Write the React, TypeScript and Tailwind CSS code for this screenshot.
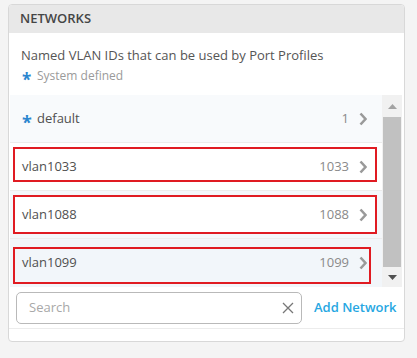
import React from 'react';

interface Network {
  name: string;
  vlan: string;
  system?: boolean;
  bg: string;
  box?: string;
}

const networks: Network[] = [
  { name: 'default', vlan: '1', system: true, bg: 'bg-[#f8fafc]' },
  { name: 'vlan1033', vlan: '1033', bg: 'bg-white', box: 'top-[4px] bottom-[8px] left-[3px] right-[5px]' },
  { name: 'vlan1088', vlan: '1088', bg: 'bg-[#f4f7fa]', box: 'top-[4px] bottom-[4px] left-[3px] right-[5px] bg-white' },
  { name: 'vlan1099', vlan: '1099', bg: 'bg-[#f2f6fa]', box: 'top-[8px] bottom-[3px] left-[3px] right-[11px]' },
];

function Chevron() {
  return (
    <svg width="8" height="14" viewBox="0 0 8 14" fill="none">
      <polyline points="1.5,1.5 6.5,7 1.5,12.5" stroke="#9a9a9a" strokeWidth="2.6" />
    </svg>
  );
}

function Star({ className }: { className?: string }) {
  return (
    <span className={'font-bold text-[#2b86cf] ' + (className ?? '')}>*</span>
  );
}

export default function App() {
  return (
    <div
      className="w-[417px] h-[358px] bg-[#f4f4f4] pt-[4px] pl-[8px]"
      style={{ fontFamily: '"Open Sans", sans-serif' }}
    >
      <div className="w-[397px] h-[338px] bg-white border border-[#d8d8d8] rounded-[4px] overflow-hidden flex flex-col">
        <div className="h-[28px] bg-[#e8e8e8] flex items-center pl-[11px] text-[13px] font-semibold text-[#454545] shrink-0">
          NETWORKS
        </div>
        <div className="h-[62px] pt-[13px] pl-[12px] shrink-0">
          <div className="text-[13px] leading-[18px] text-[#555]">
            Named VLAN IDs that can be used by Port Profiles
          </div>
          <div className="flex items-center mt-[3px] text-[12px] leading-[18px] text-[#9a9a9a]">
            <Star className="text-[17px] leading-[18px] translate-y-[4px] w-[16px] pl-[1px]" />
            System defined
          </div>
        </div>
        <div className="flex h-[192px] pl-[1px] pr-[2px] shrink-0">
          <div className="flex-1 flex flex-col">
            {networks.map((n) => (
              <div
                key={n.name}
                className={'relative h-[48px] border-b border-[#ececec] last:border-b-0 ' + n.bg}
              >
                {n.box && (
                  <div className={'absolute border-2 border-[#e01b22] ' + n.box} />
                )}
                <div className="relative h-full flex items-center pl-[12px] pr-[15px]">
                  {n.system && (
                    <Star className="text-[18px] leading-[18px] translate-y-[3px] w-[15px]" />
                  )}
                  <span className="text-[13px] text-[#505050] font-medium">{n.name}</span>
                  <span className="ml-auto text-[13px] text-[#8a8a8a] mr-[10px]">{n.vlan}</span>
                  <Chevron />
                </div>
              </div>
            ))}
          </div>
          <div className="w-[20px] bg-[#f1f1f1] flex flex-col items-center">
            <div className="h-[22px] flex items-center justify-center">
              <svg width="9" height="5" viewBox="0 0 9 5">
                <polygon points="0,5 4.5,0 9,5" fill="#a3a3a3" />
              </svg>
            </div>
            <div className="w-[18px] h-[150px] bg-[#c1c1c1]" />
            <div className="flex-1 flex items-center justify-center">
              <svg width="9" height="5" viewBox="0 0 9 5">
                <polygon points="0,0 9,0 4.5,5" fill="#505050" />
              </svg>
            </div>
          </div>
        </div>
        <div className="h-[42px] flex items-center pl-[7px] border-b border-[#ececec] shrink-0">
          <div className="w-[286px] h-[32px] border border-[#b9b9b9] rounded-[5px] flex items-center pl-[12px] pr-[7px]">
            <span className="text-[13px] text-[#a8a8a8]">Search</span>
            <svg className="ml-auto" width="12" height="12" viewBox="0 0 12 12">
              <path d="M1 1 L11 11 M11 1 L1 11" stroke="#777" strokeWidth="1.3" />
            </svg>
          </div>
          <span className="ml-[12px] text-[13px] font-semibold text-[#27a7e2]">Add Network</span>
        </div>
      </div>
    </div>
  );
}
